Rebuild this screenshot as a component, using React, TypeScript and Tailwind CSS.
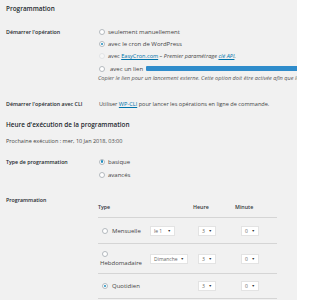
import React from 'react';

function Radio({ checked = false, disabled = false }: { checked?: boolean; disabled?: boolean }) {
  return (
    <span
      className={`inline-flex h-[6px] w-[6px] shrink-0 items-center justify-center rounded-full border ${
        disabled ? 'border-[#e2e4e6] bg-[#f6f6f6]' : 'border-[#b4b9be] bg-white'
      }`}
    >
      {checked && <span className="h-[2.5px] w-[2.5px] rounded-full bg-[#1e8cbe]" />}
    </span>
  );
}

function Select({ value, className }: { value: string; className: string }) {
  return (
    <span
      className={`flex h-[10px] items-center justify-between border border-[#e3e3e3] bg-white px-[3px] text-[5px] text-[#666] ${className}`}
    >
      <span>{value}</span>
      <span className="text-[3.5px] text-[#333]">▼</span>
    </span>
  );
}

const link = 'text-[#0073aa] underline';
const label = 'text-[5.3px] font-semibold text-[#23282d]';
const cols = 'grid-cols-[50px_44px_33px_52px]';

export default function App() {
  return (
    <div className="h-[300px] w-[297px] overflow-hidden bg-[#f1f1f1] font-['Open_Sans',sans-serif] text-[6px] leading-[8px] text-[#444]">
      <h3 className="pl-[6px] pt-[4px] text-[6.4px] font-semibold leading-[10px] text-[#23282d]">Programmation</h3>

      {/* Démarrer l'opération */}
      <div className="mt-[12px] flex">
        <div className={`flex h-[12px] w-[98px] shrink-0 items-center pl-[6px] ${label}`}>Démarrer l'opération</div>
        <div className="flex min-w-0 flex-col whitespace-nowrap">
          <div className="flex h-[12px] items-center gap-[3px] pl-[1px]">
            <Radio />
            <span>seulement manuellement</span>
          </div>
          <div className="flex h-[12px] items-center gap-[3px] pl-[1px]">
            <Radio checked />
            <span>avec le cron de WordPress</span>
          </div>
          <div className="flex h-[12px] items-center gap-[3px] pl-[1px]">
            <Radio disabled />
            <span className="text-[5.6px]">
              avec <span className={link}>EasyCron.com</span>
              <em> – Premier paramétrage <span className={link}>clé API</span>.</em>
            </span>
          </div>
          <div className="flex h-[13px] items-center gap-[3px] pl-[1px]">
            <Radio />
            <span className="pl-[2px]">avec un lien</span>
            <span className="h-[5px] w-[160px] shrink-0 rounded-[1px] bg-[#2f8ccb]" />
          </div>
          <p className="h-[6px] text-[5.6px] leading-[6px] italic text-[#555]">
            Copier le lien pour un lancement externe. Cette option doit être activée afin que le lien fonctionne.
          </p>
        </div>
      </div>

      {/* CLI */}
      <div className="mt-[17px] flex h-[12px] items-center whitespace-nowrap">
        <div className={`w-[98px] shrink-0 pl-[6px] ${label}`}>Démarrer l'opération avec CLI</div>
        <div className="pl-[1px] text-[5.6px]">
          Utiliser <span className={link}>WP-CLI</span> pour lancer les opérations en ligne de commande.
        </div>
      </div>

      <h3 className="mt-[10px] pl-[6px] text-[6.4px] font-semibold leading-[10px] text-[#23282d]">
        Heure d'exécution de la programmation
      </h3>
      <p className="mt-[7px] pl-[6px] text-[5.5px]">Prochaine exécution : mer, 10 Jan 2018, 03:00</p>

      {/* Type de programmation */}
      <div className="mt-[10px] flex">
        <div className={`flex h-[13px] w-[98px] shrink-0 items-center pl-[6px] ${label}`}>Type de programmation</div>
        <div className="flex flex-col">
          <div className="flex h-[13px] items-center gap-[3px] pl-[1px]">
            <Radio checked />
            <span>basique</span>
          </div>
          <div className="flex h-[13px] items-center gap-[3px] pl-[1px]">
            <Radio />
            <span>avancés</span>
          </div>
        </div>
      </div>

      {/* Programmation table */}
      <div className="mt-[15px] flex">
        <div className={`w-[98px] shrink-0 pl-[6px] ${label}`}>Programmation</div>
        <div className="w-[179px] shrink-0">
          <div className={`grid h-[22px] ${cols} items-center border-b border-[#d5d5d5] text-[5.3px] font-semibold text-[#32373c]`}>
            <span className="pt-[1px]">Type</span>
            <span />
            <span className="pl-[1px] pt-[1px]">Heure</span>
            <span className="pl-[10px] pt-[1px]">Minute</span>
          </div>

          <div className={`grid h-[26px] ${cols} items-center border-b border-[#d5d5d5]`}>
            <div className="flex items-center gap-[4px] pl-[4px]">
              <Radio />
              <span>Mensuelle</span>
            </div>
            <div className="pl-[2px]">
              <Select value="le 1" className="w-[25px]" />
            </div>
            <div className="pl-[6px]">
              <Select value="3" className="w-[18px]" />
            </div>
            <div className="pl-[16px]">
              <Select value="0" className="w-[18px]" />
            </div>
          </div>

          <div className={`grid h-[30px] ${cols} items-center border-b border-[#d5d5d5]`}>
            <div className="flex flex-col gap-[2px] pl-[4px] pt-[1px]">
              <Radio />
              <span className="-ml-[2px]">Hebdomadaire</span>
            </div>
            <div className="pl-[2px]">
              <Select value="Dimanche" className="w-[38px]" />
            </div>
            <div className="pl-[6px]">
              <Select value="3" className="w-[18px]" />
            </div>
            <div className="pl-[16px]">
              <Select value="0" className="w-[18px]" />
            </div>
          </div>

          <div className={`grid h-[25px] ${cols} items-center border-b border-[#d5d5d5]`}>
            <div className="flex items-center gap-[4px] pl-[4px]">
              <Radio checked />
              <span>Quotidien</span>
            </div>
            <span />
            <div className="pl-[6px]">
              <Select value="3" className="w-[18px]" />
            </div>
            <div className="pl-[16px]">
              <Select value="0" className="w-[18px]" />
            </div>
          </div>
        </div>
      </div>
    </div>
  );
}
